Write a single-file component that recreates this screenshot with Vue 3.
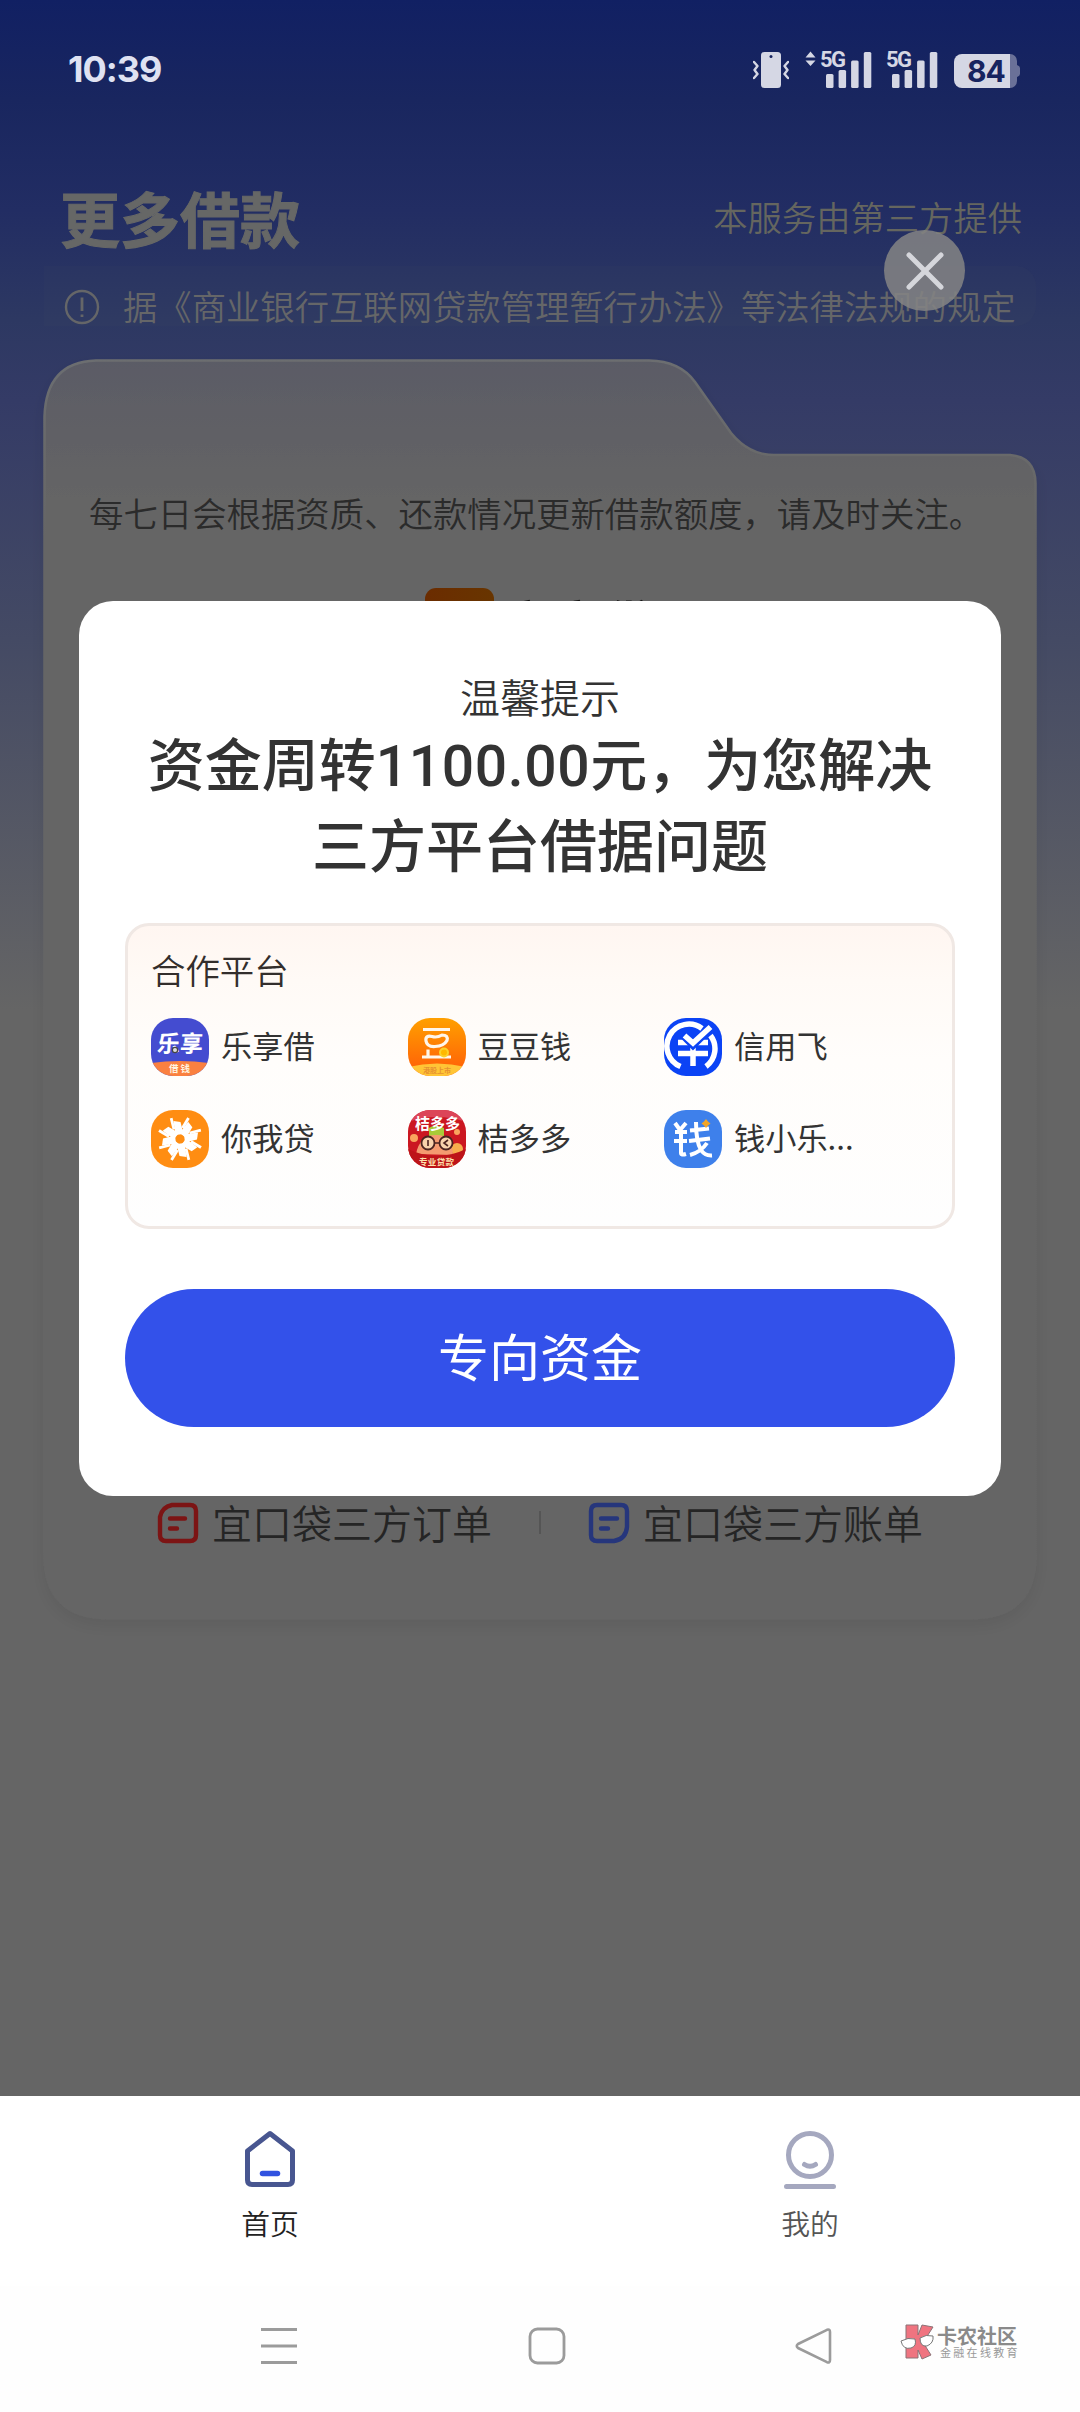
<script setup>
const statusBars = [
  { x: 0, y: 22, h: 14 },
  { x: 12.6, y: 18, h: 18 },
  { x: 25.1, y: 8.5, h: 27.5 },
  { x: 37.8, y: 0, h: 36 },
]
const partners = [
  { id: 'lexiang', name: '乐享借' },
  { id: 'doudou', name: '豆豆钱' },
  { id: 'xinyong', name: '信用飞' },
  { id: 'niwo', name: '你我贷' },
  { id: 'jieduo', name: '桔多多' },
  { id: 'qianxiao', name: '钱小乐...' },
]
const petals = [0, 45, 90, 135, 180, 225, 270, 315]
</script>

<template>
  <div class="screen">
    <header class="status">
      <span class="clock">10:39</span>
      <div class="status-icons">
        <svg class="vibrate" width="36" height="36" viewBox="0 0 36 36">
          <rect x="8" y="0" width="20" height="36" rx="3.5" fill="#d5d7e4" />
          <circle cx="18" cy="4.6" r="1.5" fill="#17245f" />
          <path d="M1 10l3.5 4-3 4 3 4-3.500 4M35 10l-3.500 4 3 4-3 4 3.500 4" fill="none" stroke="#d5d7e4" stroke-width="2.4" stroke-linecap="round" stroke-linejoin="round" />
        </svg>
        <div class="signal sig1">
          <svg class="arrows" width="11" height="16" viewBox="0 0 11 16">
            <path d="M0.500 6.500L5.500 0.500l5 6zM0.500 9.500L5.500 15l5-5.500z" fill="#d5d7e4" />
          </svg>
          <span class="net">5G</span>
          <svg width="46" height="37" viewBox="0 0 46 37">
            <rect v-for="b in statusBars" :key="b.x" :x="b.x" :y="b.y + 1" width="7.500" :height="b.h" rx="1.5" fill="#d5d7e4" />
          </svg>
        </div>
        <div class="signal sig2">
          <span class="net">5G</span>
          <svg width="46" height="37" viewBox="0 0 46 37">
            <rect v-for="b in statusBars" :key="b.x" :x="b.x" :y="b.y + 1" width="7.500" :height="b.h" rx="1.5" fill="#d5d7e4" />
          </svg>
        </div>
        <div class="battery">
          <svg width="66" height="34" viewBox="0 0 66 34">
            <path d="M56 0a7 7 0 0 1 7 7v4q3 1 3 3v6q0 2-3 3v4a7 7 0 0 1-7 7z" fill="#6a7198" />
            <path d="M8 0H56V34H8a8 8 0 0 1-8-8V8a8 8 0 0 1 8-8z" fill="#d5d7e4" />
          </svg>
          <span class="level">84</span>
        </div>
      </div>
    </header>

    <div class="title-row">
      <h1>更多借款</h1>
      <span>本服务由第三方提供</span>
    </div>
    <div class="notice">
      <svg width="36" height="36" viewBox="0 0 36 36">
        <circle cx="18" cy="18" r="16" fill="none" stroke="#656668" stroke-width="2.400" />
        <path d="M18 8.500v13.500M18 25.500v2.500" stroke="#656668" stroke-width="2.800" />
      </svg>
      <span>据《商业银行互联网贷款管理暂行办法》等法律法规的规定</span>
    </div>

    <main class="card">
      <svg class="card-shape" width="1040" height="1310" viewBox="0 0 1040 1310">
        <defs>
          <linearGradient id="cardFill" gradientUnits="userSpaceOnUse" x1="0" y1="20" x2="0" y2="160">
            <stop offset="0" stop-color="#5a5b66" />
            <stop offset="0.500" stop-color="#606065" />
            <stop offset="1" stop-color="#656565" />
          </linearGradient>
          <linearGradient id="cardLine" gradientUnits="userSpaceOnUse" x1="0" y1="20" x2="0" y2="200">
            <stop offset="0" stop-color="#6c6e70" />
            <stop offset="1" stop-color="#656565" />
          </linearGradient>
          <filter id="cardShadow" x="-5%" y="-5%" width="110%" height="110%">
            <feDropShadow dx="0" dy="6" stdDeviation="8" flood-color="#000" flood-opacity="0.07" />
          </filter>
        </defs>
        <path d="M76 21.500H629Q660 22 675 43L711 94Q729 116 754 116H990Q1015 118 1015.500 144V1214Q1016 1279 951 1279H88Q24.500 1279 24.500 1214V78Q26 23 76 21.500Z" fill="url(#cardFill)" stroke="url(#cardLine)" stroke-width="2.500" filter="url(#cardShadow)" />
      </svg>
      <p class="card-tip">每七日会根据资质、还款情况更新借款额度，请及时关注。</p>
      <div class="brand"><i></i><b>宜享贷</b></div>
      <div class="orders">
        <div class="order">
          <svg width="42" height="42" viewBox="0 0 42 42" fill="none" stroke="#7c1414" stroke-width="4.400" stroke-linecap="round">
            <path d="M15 3H33Q39 3 39 9V33Q39 39 33 39H9Q3 39 3 33V15Q5 5 15 3ZM13 16.500H28M13 26.500h7" />
          </svg>
          <span>宜口袋三方订单</span>
        </div>
        <i class="split"></i>
        <div class="order">
          <svg width="42" height="42" viewBox="0 0 42 42" fill="none" stroke="#26367c" stroke-width="4.400" stroke-linecap="round">
            <path d="M9 3H33Q39 3 39 9V25Q38 37 26 39H9Q3 39 3 33V9Q3 3 9 3ZM13 16.500H29M13 26.500h7" />
          </svg>
          <span>宜口袋三方账单</span>
        </div>
      </div>
    </main>

    <nav class="tabs">
      <div class="tab active">
        <svg width="56" height="60" viewBox="0 0 56 60" fill="none" stroke-linejoin="round" stroke-linecap="round">
          <path d="M28 4.500L50.500 22V51Q50.500 55.500 46 55.500H10Q5.500 55.500 5.500 51V22Z" stroke="#485690" stroke-width="5" />
          <path d="M20.500 44.500H35.500" stroke="#3152e0" stroke-width="5.500" />
        </svg>
        <span>首页</span>
      </div>
      <div class="tab">
        <svg width="56" height="60" viewBox="0 0 56 60" fill="none" stroke="#a5a8bf" stroke-width="5" stroke-linecap="round">
          <circle cx="28" cy="26" r="21.500" />
          <path d="M22.500 35.500Q28 39 33.500 35.500M4.500 57.500H51.500" />
        </svg>
        <span>我的</span>
      </div>
    </nav>
    <footer class="system">
      <svg class="s-menu" width="36" height="38" viewBox="0 0 36 38"><path d="M0 2.500H36M0 19H36M0 35.500H36" stroke="#9b9b9b" stroke-width="3" /></svg>
      <svg class="s-home" width="38" height="38" viewBox="0 0 38 38"><rect x="2" y="2" width="34" height="34" rx="7.500" fill="none" stroke="#9b9b9b" stroke-width="2.800" /></svg>
      <svg class="s-back" width="38" height="38" viewBox="0 0 38 38"><path d="M32 2.800Q35 1.800 35 5V33Q35 36.200 32 35.200L3 21Q0.500 19 3 17Z" fill="none" stroke="#9b9b9b" stroke-width="2.600" stroke-linejoin="round" /></svg>
      <div class="mark">
        <svg width="35" height="36" viewBox="0 0 35 36">
          <path d="M6 1H18L18 11 22 1 33 3 26 14 24 20 31 31 22 35 18 26V34H6Z" fill="#ef7480" stroke="#8b7377" stroke-width="1" stroke-linejoin="round" />
          <path d="M1 17Q8 13 15 15 17 22 11 24 3 26 1 17ZM20 14Q26 10 33 12 34 19 27 22 20 23 20 14Z" fill="#fff" stroke="#777" stroke-width="1" />
        </svg>
        <div class="mark-text"><b>卡农社区</b><small>金融在线教育</small></div>
      </div>
    </footer>

    <button class="close">
      <svg width="40" height="40" viewBox="0 0 40 40"><path d="M4 4L36 36M36 4L4 36" stroke="#d5d6db" stroke-width="5" stroke-linecap="round" /></svg>
    </button>

    <section class="modal">
      <p class="modal-tip">温馨提示</p>
      <h2>资金周转<span>1100.00</span>元，为您解决<br />三方平台借据问题</h2>
      <div class="panel">
        <h3>合作平台</h3>
        <div class="grid">
          <div v-for="p in partners" :key="p.id" class="partner">
            <svg class="logo" width="58" height="58" viewBox="0 0 58 58">
              <template v-if="p.id === 'lexiang'">
                <rect width="58" height="58" fill="#444cd0" />
                <path d="M0 45Q29 41 58 45V58H0Z" fill="#fa8040" />
                <text x="6" y="34" font-size="23" font-weight="700" fill="#fff" textLength="46" transform="skewX(-4) translate(2 0)">乐享</text>
                <circle cx="24" cy="32" r="2.600" fill="#ddd" stroke="#444" stroke-width="1.200" />
                <text x="18" y="54" font-size="9.500" font-weight="700" fill="#fff3df" textLength="21">借钱</text>
              </template>
              <template v-else-if="p.id === 'doudou'">
                <defs><linearGradient id="beanBg" x1="0" y1="0" x2="0" y2="1"><stop offset="0" stop-color="#ffa000" /><stop offset="1" stop-color="#ff5b08" /></linearGradient></defs>
                <rect width="58" height="58" fill="url(#beanBg)" />
                <path d="M0 49Q29 42 58 49V58H0Z" fill="#ffc536" />
                <g fill="none" stroke="#fff6ea" stroke-width="3.200">
                  <path d="M15 11.500H42M14 39H43M20 31.500V38" />
                  <path d="M24 18.500Q17 17 18 23 19 29 27 28.500 36 28 39 22.500 40.500 17 34 17 29 20 24 18.500Z" />
                </g>
                <circle cx="36" cy="34.500" r="4" fill="#ffb900" stroke="#fbd22a" stroke-width="2" />
                <text x="15" y="55" font-size="7" font-weight="700" fill="#e79131" textLength="28">港股上市</text>
              </template>
              <template v-else-if="p.id === 'xinyong'">
                <rect width="58" height="58" fill="#0b43f5" />
                <path d="M14 24.500H44M14 35.500H44M29 26V48" stroke="#fff" stroke-width="5.500" />
                <path d="M18.500 17L29 27.500 44 13" fill="none" stroke="#0b43f5" stroke-width="7" />
                <path d="M16.500 48.500A22 22 0 1 1 38 10.500M46.500 17.500A22 22 0 0 1 42 48.500" fill="none" stroke="#fff" stroke-width="5.500" />
                <path d="M20.500 17.500L29 25 46.500 9" fill="none" stroke="#fff" stroke-width="5.500" />
              </template>
              <template v-else-if="p.id === 'niwo'">
                <rect width="58" height="58" fill="#ff8d12" />
                <g v-for="a in petals" :key="a" :transform="`rotate(${a} 29 29)`">
                  <path d="M24.500 25L22.500 11 29.500 12 32.500 24Z" fill="#fff" />
                  <path d="M31.500 18L37.500 8" stroke="#fff" stroke-width="2.800" />
                </g>
                <circle cx="29" cy="29" r="4" fill="#ff8d12" />
              </template>
              <template v-else-if="p.id === 'jieduo'">
                <rect width="58" height="58" fill="#cb1721" />
                <path d="M0 0H58V12Q29 2 0 12Z" fill="#dc4558" />
                <circle cx="6" cy="28" r="4" fill="#f9a45e" /><circle cx="49" cy="22" r="3" fill="#f9a45e" /><circle cx="49" cy="39" r="6" fill="#f7ad4d" />
                <path d="M21 18Q27 13 36 18V29H21Z" fill="#a9ca38" />
                <path d="M8 44Q12 24 29 25 44 25 45 45Z" fill="#f49a70" />
                <path d="M0 39Q29 53 58 39V58H0Z" fill="#bd1419" />
                <g fill="#f8d2ac" stroke="#4b2420" stroke-width="1.800"><circle cx="20" cy="33" r="6.500" /><circle cx="38" cy="33" r="6.500" /></g>
                <path d="M27 33h5M20 30v6M40 30l-4 3 4 3" fill="none" stroke="#4b2420" stroke-width="1.600" />
                <text x="7" y="19" font-size="15" font-weight="700" fill="#fff" textLength="45">桔多多</text>
                <text x="11" y="54.500" font-size="8.500" font-weight="700" fill="#ffe2ad" textLength="35">专业贷款</text>
              </template>
              <template v-else>
                <rect width="58" height="58" fill="#3e80eb" />
                <g fill="none" stroke="#fff" stroke-width="4" stroke-linejoin="round">
                  <path d="M11 13L16 20 22 13M11 22H23M10 31H23M17 21V43Q17 45.500 22 44" />
                  <path d="M26 20.500L45 18.500M25 31L46 28.500M32 12Q32 32 37 40 41 46 48 45.500M43 33Q37 42 26 45" />
                </g>
                <path d="M42 9l2 2.500 2.500 2-2.500 2-2 2.500-2-2.500-2.500-2 2.500-2z" fill="#f2a528" />
              </template>
            </svg>
            <span>{{ p.name }}</span>
          </div>
        </div>
      </div>
      <button class="go">专向资金</button>
    </section>
  </div>
</template>

<style>
body { background: #656565; }
</style>

<style scoped>
* { box-sizing: border-box; margin: 0; padding: 0; }
.screen {
  position: relative;
  display: flex;
  flex-direction: column;
  width: 1080px;
  height: 2412px;
  overflow: hidden;
  font-family: "Noto Sans CJK SC", sans-serif;
  background: linear-gradient(180deg, #112063 0, #19265f 100px, #222d63 210px, #2d3862 320px, #343b66 400px, #444a64 640px, #656565 1010px);
}
svg { display: block; flex: none; }
.status {
  display: flex;
  justify-content: space-between;
  align-items: flex-start;
  height: 168px;
  padding: 45px 60px 0 68px;
}
.clock {
  font: 700 36px/48px Inter, sans-serif;
  letter-spacing: -1px;
  color: #dfe2f2;
}
.status-icons { display: flex; align-items: flex-start; padding-top: 7px; }
.signal { position: relative; height: 37px; margin-top: -1px; }
.sig1 { width: 67px; margin-left: 16px; padding-left: 21px; }
.sig2 { width: 52px; margin-left: 14px; padding-left: 6px; }
.arrows { position: absolute; left: 0; top: 0; }
.net {
  position: absolute;
  left: 15px;
  top: -4px;
  font: 700 22px/26px Roboto, sans-serif;
  letter-spacing: -1.500px;
  color: #d5d7e4;
}
.sig2 .net { left: 0; }
.battery { position: relative; margin: 2px 0 0 16px; }
.level {
  position: absolute;
  left: 0;
  top: 0;
  width: 64px;
  text-align: center;
  font: 700 30px/35px Inter, sans-serif;
  letter-spacing: -1px;
  color: #17245f;
}
.title-row {
  display: flex;
  justify-content: space-between;
  height: 98px;
  padding: 0 58px 0 60px;
}
h1 {
  font-size: 60px;
  line-height: 98px;
  font-weight: 700;
  color: #666766;
  -webkit-text-stroke: 1px #666766;
}
.title-row span { font-size: 34.300px; font-weight: 350; line-height: 96px; color: #65665f; }
.notice {
  display: flex;
  align-items: center;
  gap: 23px;
  width: 992px;
  height: 60px;
  margin-left: 44px;
  padding: 17px 0 0 20px;
  background: rgba(102, 102, 102, 0.05);
  border-radius: 0 20px 20px 0;
  color: #656668;
}
.notice svg { margin-top: 4px; }
.notice span { font-size: 34.350px; font-weight: 350; line-height: 40px; white-space: nowrap; }
.card {
  position: relative;
  display: flex;
  flex-direction: column;
  width: 994px;
  height: 1260px;
  margin: 34px 0 0 43px;
}
.card-shape { position: absolute; left: -23px; top: -21px; }
.card-tip, .brand, .orders { position: relative; }
.card-tip {
  margin: 127px 0 0 46px;
  font-size: 34.400px;
  line-height: 50px;
  font-weight: 350;
  white-space: nowrap;
  color: #2b2b2b;
}
.brand { display: flex; gap: 9px; margin: 51px 0 0 382px; height: 70px; }
.brand i { width: 69px; height: 69px; border-radius: 11px; background: linear-gradient(90deg, #6b2c00, #683500); }
.brand b { margin-top: 8px; font-size: 50px; line-height: 50px; color: #181818; }
.orders {
  display: flex;
  align-items: center;
  justify-content: center;
  gap: 47px;
  margin-top: 839px;
  height: 50px;
}
.order { display: flex; align-items: center; gap: 13px; font-size: 40px; line-height: 50px; font-weight: 350; color: #252525; white-space: nowrap; }
.order svg { margin-top: 2px; }
.split { width: 2px; height: 23px; background: #555; }
.tabs {
  display: flex;
  height: 190px;
  margin-top: 476px;
  background: #fff;
}
.tab { flex: 1; display: flex; flex-direction: column; align-items: center; padding-top: 33px; color: #555; font-size: 28.800px; line-height: 40px; font-weight: 350; }
.tab span { margin-top: 14px; }
.tab.active { color: #222; }
.system { display: flex; flex: 1; align-items: flex-start; padding: 41px 0 0 261px; background: #fefefe; }
.s-home { margin-left: 231px; }
.s-back { margin-left: 229px; }
.mark { display: flex; gap: 2px; margin: -3px 0 0 67px; }
.mark-text { display: flex; flex-direction: column; }
.mark b { font-size: 20px; line-height: 23px; font-weight: 700; color: #8a8a8a; }
.mark small { margin: -2px 0 0 3px; font-size: 11px; line-height: 14px; letter-spacing: 2.300px; color: #999; white-space: nowrap; }
.close {
  position: absolute;
  left: 884px;
  top: 230px;
  display: flex;
  align-items: center;
  justify-content: center;
  width: 81px;
  height: 81px;
  border: 0;
  border-radius: 50%;
  background: rgba(132, 132, 132, 0.86);
}
.modal {
  position: absolute;
  left: 79px;
  top: 601px;
  width: 922px;
  height: 895px;
  padding: 69px 46px 0;
  border-radius: 34px;
  background: #fff;
  color: #333;
}
.modal-tip { font-size: 40px; line-height: 52px; text-align: center; font-weight: 350; }
h2 { height: 162px; font-size: 57px; line-height: 81px; font-weight: 500; text-align: center; white-space: nowrap; margin-top: -1px; }
h2 span { font-family: Roboto, sans-serif; line-height: 1; letter-spacing: 0.600px; }
.panel {
  height: 306px;
  margin-top: 40px;
  padding: 20px 23px;
  border: 3px solid #f0e8e4;
  border-radius: 24px;
  background: linear-gradient(180deg, #fff6f1 0, #fffaf6 18%, #fffdfb 45%, #fefefe 100%);
}
h3 { font-size: 34.400px; line-height: 46px; font-weight: 350; color: #332e2c; }
.grid { display: grid; grid-template-columns: repeat(3, 256.500px); row-gap: 34px; margin-top: 26px; }
.partner { display: flex; align-items: center; gap: 12px; height: 58px; font-size: 31.200px; color: #333; white-space: nowrap; }
.partner span { line-height: 46px; margin-bottom: 4px; }
.logo { border-radius: 22px; }
.logo text { font-family: "Noto Sans CJK SC", sans-serif; }
.go {
  display: block;
  width: 830px;
  height: 138px;
  margin-top: 60px;
  padding-bottom: 6px;
  border: 0;
  border-radius: 69px;
  background: #3351ea;
  color: #fff;
  font: 400 51px/132px "Noto Sans CJK SC", sans-serif;
}
</style>
